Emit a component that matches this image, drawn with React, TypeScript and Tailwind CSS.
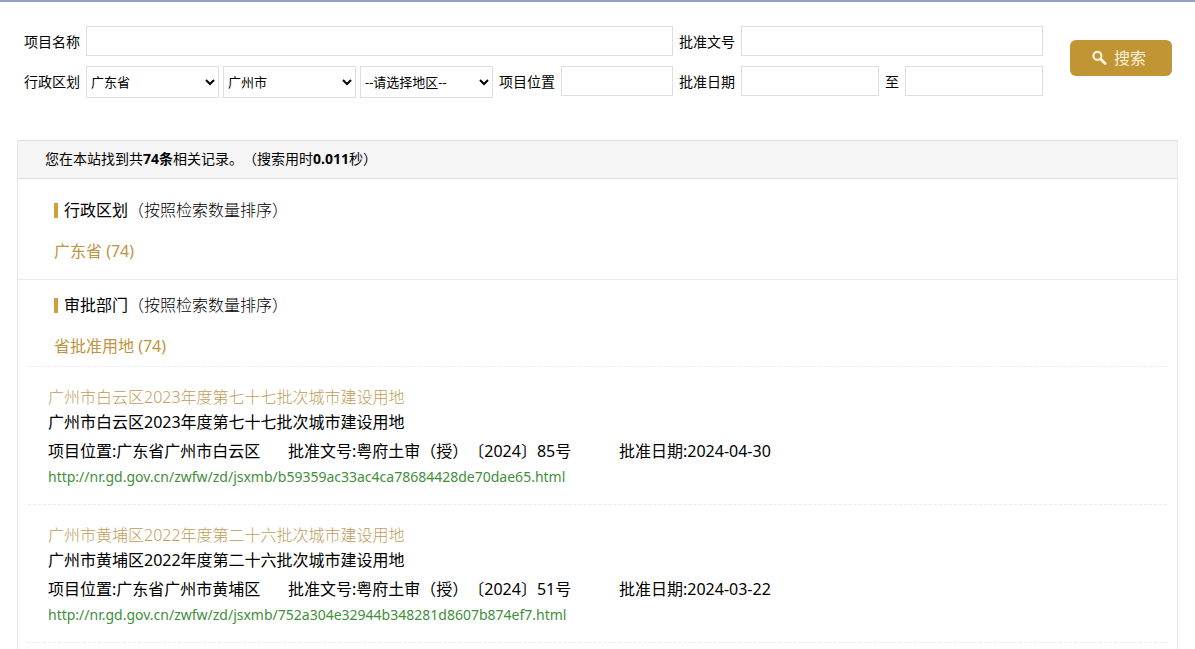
import React, { useState } from 'react';

const records = [
  {
    title: '广州市白云区2023年度第七十七批次城市建设用地',
    location: '广东省广州市白云区',
    docNo: '粤府土审（授）〔2024〕85号',
    date: '2024-04-30',
    url: 'http://nr.gd.gov.cn/zwfw/zd/jsxmb/b59359ac33ac4ca78684428de70dae65.html',
  },
  {
    title: '广州市黄埔区2022年度第二十六批次城市建设用地',
    location: '广东省广州市黄埔区',
    docNo: '粤府土审（授）〔2024〕51号',
    date: '2024-03-22',
    url: 'http://nr.gd.gov.cn/zwfw/zd/jsxmb/752a304e32944b348281d8607b874ef7.html',
  },
];

const facets = [
  { title: '行政区划', item: '广东省 (74)' },
  { title: '审批部门', item: '省批准用地 (74)' },
];

const labelClass = 'shrink-0 leading-8';
const inputClass = 'h-[30px] min-w-0 border border-[#dedede] bg-white px-1 text-sm outline-none';
const selectClass = 'h-8 min-w-0 flex-1 border border-[#dedede] bg-white text-[13px]';

const SearchForm: React.FC = () => {
  const [province, setProvince] = useState('广东省');
  const [city, setCity] = useState('广州市');
  const [district, setDistrict] = useState('--请选择地区--');

  return (
    <form className="flex items-start pt-6 pr-[23px] pl-6 text-sm" onSubmit={(e) => e.preventDefault()}>
      <div className="flex flex-1 flex-col gap-2">
        <div className="flex items-start gap-1.5">
          <div className="flex flex-1 items-start gap-1.5">
            <label htmlFor="name" className={labelClass}>项目名称</label>
            <input id="name" type="text" className={`${inputClass} flex-1`} />
          </div>
          <div className="flex w-[364px] items-start gap-1.5">
            <label htmlFor="docNo" className={labelClass}>批准文号</label>
            <input id="docNo" type="text" className={`${inputClass} flex-1`} />
          </div>
        </div>

        <div className="flex items-start gap-1.5">
          <div className="flex flex-1 items-start gap-1.5">
            <label htmlFor="province" className={labelClass}>行政区划</label>
            <div className="flex flex-1 gap-1">
              <select id="province" className={selectClass} value={province} onChange={(e) => setProvince(e.target.value)}>
                <option>广东省</option>
              </select>
              <select aria-label="城市" className={selectClass} value={city} onChange={(e) => setCity(e.target.value)}>
                <option>广州市</option>
              </select>
              <select aria-label="地区" className={selectClass} value={district} onChange={(e) => setDistrict(e.target.value)}>
                <option>--请选择地区--</option>
              </select>
            </div>
            <label htmlFor="location" className={labelClass}>项目位置</label>
            <input id="location" type="text" className={`${inputClass} w-28`} />
          </div>
          <div className="flex w-[364px] items-start gap-1.5">
            <label htmlFor="dateFrom" className={labelClass}>批准日期</label>
            <input id="dateFrom" type="text" className={`${inputClass} flex-1`} />
            <label htmlFor="dateTo" className={labelClass}>至</label>
            <input id="dateTo" type="text" className={`${inputClass} flex-1`} />
          </div>
        </div>
      </div>

      <button
        type="submit"
        className="mt-3.5 ml-[27px] flex h-9 w-[102px] items-center justify-center gap-1.5 rounded-md bg-[#c19434] pr-1 text-base text-[#fdf3dc]"
      >
        <svg width="16" height="16" viewBox="0 0 16 16" fill="none" stroke="currentColor" aria-hidden="true">
          <circle cx="5.4" cy="5.8" r="4" strokeWidth="2.2" />
          <path d="M8.8 9.2 L13.2 13.6" strokeWidth="2.8" strokeLinecap="round" />
        </svg>
        <span>搜索</span>
      </button>
    </form>
  );
};

export default function App() {
  return (
    <div
      lang="zh-CN"
      className="flex min-h-screen flex-col border-t-2 border-[#8fa3c3] bg-white font-['Noto_Sans','Noto_Sans_CJK_SC',sans-serif] text-black [text-spacing-trim:space-all]"
    >
      <SearchForm />

      <main className="mx-[17px] mt-[42px] flex-1 border-x border-[#e8e8e8]">
        <p className="h-[39px] border-y border-[#dedede] bg-[#f5f5f5] pl-[27px] text-sm leading-9">
          您在本站找到共<b>74条</b>相关记录。（搜索用时<b>0.011</b>秒）
        </p>

        {/* Facets */}
        {facets.map((facet, i) => (
          <section key={facet.title} className={i === 0 ? 'h-[101px] border-b border-[#e8e8e8] px-9 pt-[19px]' : 'px-9 pt-[13px]'}>
            <h2 className="flex items-center text-base leading-6">
              <span className="mr-1.5 h-[15px] w-1 bg-[#cfa03a]" />
              <span>
                {facet.title}
                <span className="font-['KaiTi','Kaiti_SC','Noto_Sans','Noto_Sans_CJK_SC',serif] font-light">（按照检索数量排序）</span>
              </span>
            </h2>
            <a href="#" className="mt-[17px] block leading-6 text-[#bd9440]">{facet.item}</a>
          </section>
        ))}

        {/* Results */}
        <ul className="mx-2.5 mt-2 border-t border-dashed border-[#ebebeb]">
          {records.map((record) => (
            <li key={record.url} className="border-b border-dashed border-[#ebebeb] px-5 pt-[18px] pb-[15px] leading-[25px]">
              <h3>
                <a href={record.url} className="font-light text-[#c09c58]">{record.title}</a>
              </h3>
              <p>{record.title}</p>
              <p className="mt-1 flex">
                <span className="w-60">项目位置:{record.location}</span>
                <span className="w-[331px]">批准文号:{record.docNo}</span>
                <span>批准日期:{record.date}</span>
              </p>
              <a href={record.url} className="block text-sm leading-[25px] text-[#3f8f3a]">{record.url}</a>
            </li>
          ))}
        </ul>
      </main>
    </div>
  );
}
